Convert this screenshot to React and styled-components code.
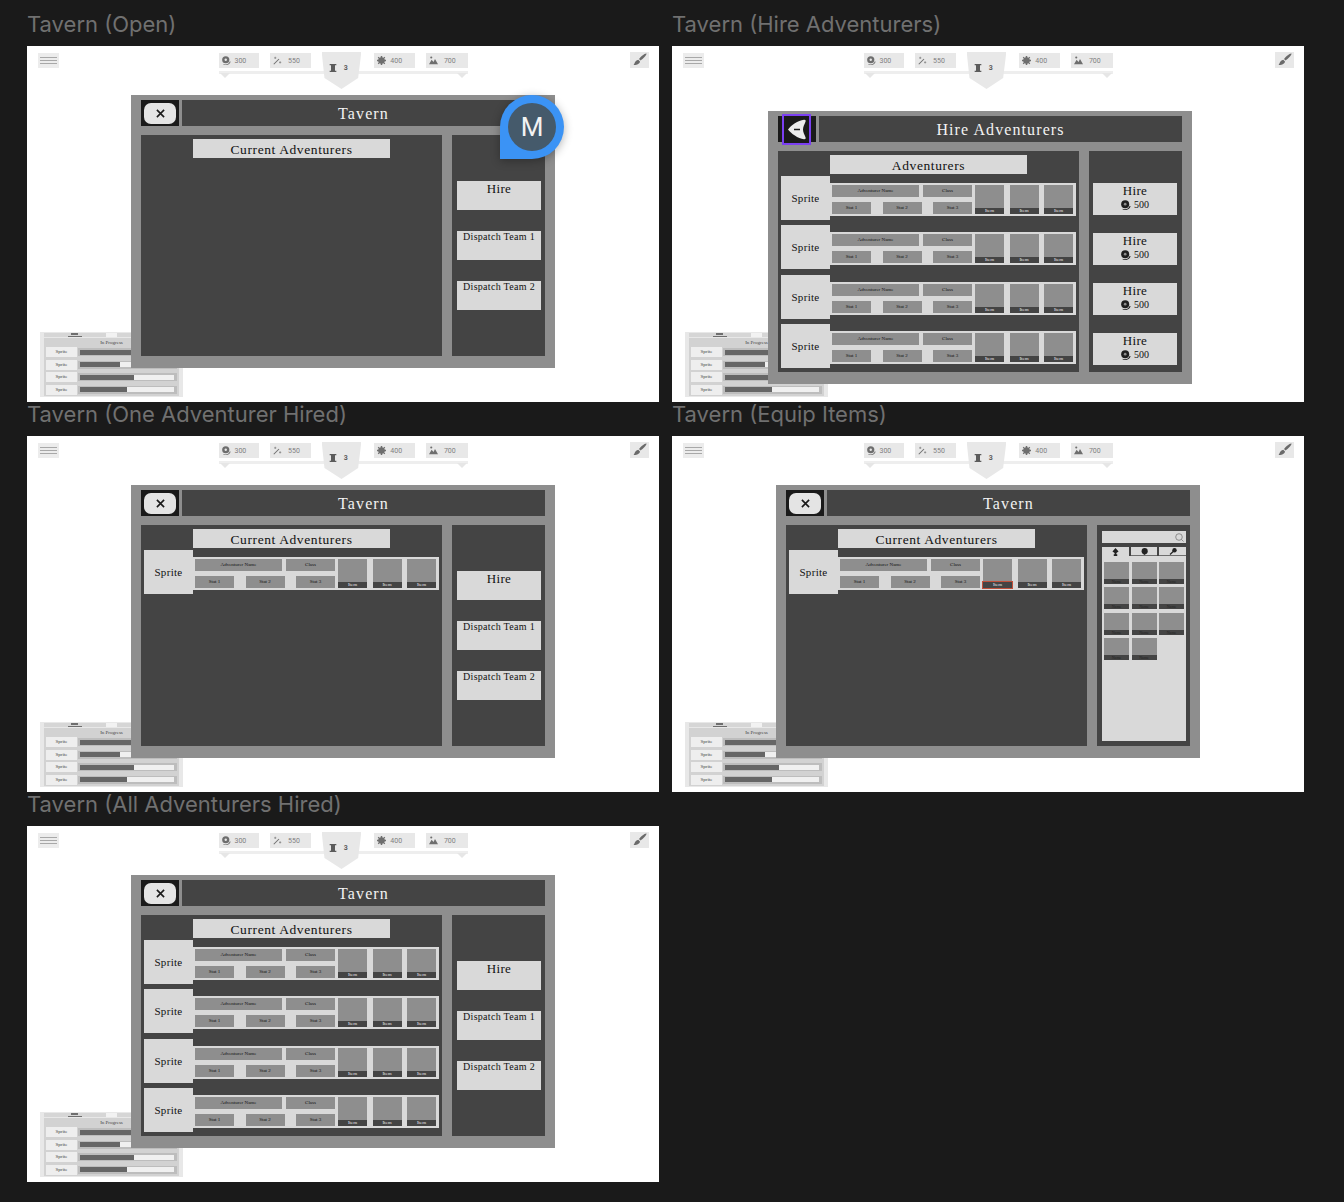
import styled, { createGlobalStyle } from "styled-components";

const GlobalStyle = createGlobalStyle`
  html, body {
    margin: 0;
    background: #1a1a1a;
  }
  * {
    box-sizing: border-box;
  }
`;

const SERIF = `"Liberation Serif", "DejaVu Serif", serif`;

const CoinsIcon = ({ size = 9, color = "#6e6e6e", hole = "#e6e6e6" }) => (
  <svg width={size} height={size} viewBox="0 0 12 12">
    <circle cx="5" cy="5" r="4.800" fill={color} />
    <circle cx="5" cy="5" r="1.600" fill={hole} />
    <path d="M2 10.500c3 1.500 7 .8 8.500-3.500l1 .6c-1 4-6 5.400-9.500 3.900z" fill={color} />
  </svg>
);

const WandIcon = () => (
  <svg width="9" height="9" viewBox="0 0 12 12" fill="none" stroke="#6e6e6e">
    <path d="M1 11 8 4" strokeWidth="1.400" />
    <path d="M3 1v3M1.500 2.500h3M9.500 7v3M8 8.500h3" strokeWidth=".8" />
  </svg>
);

const ScrollIcon = () => (
  <svg width="8" height="8" viewBox="0 0 12 12">
    <path d="M1 0h10v2H9v8h2v2H1v-2h2V2H1z" fill="#5c5c5c" />
  </svg>
);

const GearIcon = () => (
  <svg width="9" height="9" viewBox="0 0 12 12">
    <circle cx="6" cy="6" r="4.400" fill="#6e6e6e" />
    <path d="M5 0h2v12H5zM0 5h12v2H0zM2 1l9 9-1 1-9-9zM10 1l1 1-9 9-1-1z" fill="#6e6e6e" />
  </svg>
);

const MountainIcon = () => (
  <svg width="9" height="9" viewBox="0 0 12 12">
    <circle cx="3" cy="2" r="1.400" fill="#6e6e6e" />
    <path d="M0 11 3.500 5 6 8l2-4 4 7z" fill="#6e6e6e" />
  </svg>
);

const BrushIcon = () => (
  <svg width="14" height="14" viewBox="0 0 14 14">
    <path d="M13.500.5c.3 1.600-3.600 5.500-6 7L6 6c1.500-2.500 6-6 7.500-5.500z" fill="#6a6a6a" />
    <path d="M5.300 6.800 7 8.500c-.2 2.500-3.500 3.800-6.500 3.500 1.500-1 1-4.500 4.800-5.200z" fill="#6a6a6a" />
  </svg>
);

const CloseIcon = () => (
  <svg width="11" height="9" viewBox="0 0 12 10" fill="none" stroke="#1a1a1a" strokeWidth="1.800">
    <path d="M2 1l8 8M10 1 2 9" />
  </svg>
);

const BackIcon = () => (
  <svg width="20" height="21" viewBox="0 0 20 21">
    <path d="M1 10.500C4 6.500 11 1.500 17 .8c1.500-.2 2 .8 1.500 2-1 2.500-2.500 5-2.500 7.700s1.500 5.200 2.500 7.700c.5 1.200 0 2.200-1.500 2C11 19.500 4 14.500 1 10.500z" fill="#ececec" />
    <path d="M7 10.500h6" stroke="#1a1a1a" strokeWidth="1.500" />
  </svg>
);

const SearchIcon = () => (
  <svg width="9" height="9" viewBox="0 0 9 9" fill="none" stroke="#6e6e6e" strokeWidth=".7">
    <circle cx="4" cy="4" r="3.300" />
    <path d="M6.500 6.500 8.500 8.500" />
  </svg>
);

const SpadeIcon = () => (
  <svg width="7" height="8" viewBox="0 0 8 9">
    <path d="M4 0 7.500 4 5 5.500v1.500h1V9H2V7h1V5.500L.5 4z" fill="#222" />
  </svg>
);

const BlobIcon = () => (
  <svg width="7" height="7" viewBox="0 0 8 8">
    <circle cx="4.200" cy="3.600" r="3.500" fill="#222" />
    <path d="M2 6.500 4 8l2-1.500z" fill="#222" />
  </svg>
);

const KeyIcon = () => (
  <svg width="8" height="7" viewBox="0 0 8 7">
    <circle cx="5.500" cy="2.300" r="2.200" fill="#222" />
    <path d="M4.500 3.300 1 6.500" stroke="#222" strokeWidth="1.200" />
  </svg>
);

const HudBar = () => (
  <TopBar>
    <MenuButton>
      <MenuLine />
      <MenuLine />
      <MenuLine />
    </MenuButton>
    <HudGroup>
      <HudRail />
      <RailTipLeft />
      <RailTipRight />
      <HudPill $gap={4}>
        <CoinsIcon />
        <span>300</span>
      </HudPill>
      <HudPill $gap={6}>
        <WandIcon />
        <span>550</span>
      </HudPill>
      <Pennant>
        <ScrollIcon />
        <span>3</span>
      </Pennant>
      <HudPill $gap={4}>
        <GearIcon />
        <span>400</span>
      </HudPill>
      <HudPill $gap={6} $wide>
        <MountainIcon />
        <span>700</span>
      </HudPill>
    </HudGroup>
    <BrushButton>
      <BrushIcon />
    </BrushButton>
  </TopBar>
);

const PROGRESS = [57, 43, 57, 50];

const InProgress = () => (
  <ProgressCard>
    <ProgressTabs>
      <ProgressTab>
        <svg width="14" height="4" viewBox="0 0 14 4">
          <path d="M0 3h14v1H0zM3 0h7v2H3z" fill="#6e6e6e" />
        </svg>
      </ProgressTab>
      <ProgressTabGap />
      <ProgressTab />
    </ProgressTabs>
    <ProgressBody>
      <ProgressTitle>In Progress</ProgressTitle>
      {PROGRESS.map((value, i) => (
        <ProgressRow key={i}>
          <ProgressSprite>Sprite</ProgressSprite>
          <ProgressTrack>
            <ProgressInner>
              <ProgressFill style={{ width: `${value}%` }} />
            </ProgressInner>
          </ProgressTrack>
        </ProgressRow>
      ))}
    </ProgressBody>
  </ProgressCard>
);

const AdventurerRow = ({ marked }) => (
  <RowWrap>
    <Sprite>Sprite</Sprite>
    <RowBody>
      <RowInfo>
        <InfoLine>
          <NameTag>Adventurer Name</NameTag>
          <ClassTag>Class</ClassTag>
        </InfoLine>
        <InfoLine>
          <StatTag>Stat 1</StatTag>
          <StatTag>Stat 2</StatTag>
          <StatTag>Stat 3</StatTag>
        </InfoLine>
      </RowInfo>
      <ItemSlots>
        <ItemSlot>
          <ItemLabel $marked={marked}>Item</ItemLabel>
        </ItemSlot>
        <ItemSlot>
          <ItemLabel>Item</ItemLabel>
        </ItemSlot>
        <ItemSlot>
          <ItemLabel>Item</ItemLabel>
        </ItemSlot>
      </ItemSlots>
    </RowBody>
  </RowWrap>
);

const AdventurerPanel = ({ title, count, marked }) => (
  <MainPanel>
    <PanelTitle>{title}</PanelTitle>
    <RowList>
      {Array.from({ length: count }, (_, i) => (
        <AdventurerRow key={i} marked={marked} />
      ))}
    </RowList>
  </MainPanel>
);

const ActionPanel = () => (
  <SidePanel>
    <ActionList>
      <ActionButton $large>Hire</ActionButton>
      <ActionButton>Dispatch Team 1</ActionButton>
      <ActionButton>Dispatch Team 2</ActionButton>
    </ActionList>
  </SidePanel>
);

const HirePanel = () => (
  <SidePanel>
    <HireList>
      {[0, 1, 2, 3].map((i) => (
        <HireButton key={i}>
          <HireText>Hire</HireText>
          <HireCost>
            <CoinsIcon size={10} color="#1f1f1f" hole="#8e8e8e" />
            500
          </HireCost>
        </HireButton>
      ))}
    </HireList>
  </SidePanel>
);

const EquipPanel = () => (
  <SidePanel>
    <EquipInner>
      <SearchBox>
        <SearchIcon />
      </SearchBox>
      <EquipTabs>
        <EquipTab $active>
          <SpadeIcon />
        </EquipTab>
        <EquipTab>
          <BlobIcon />
        </EquipTab>
        <EquipTab>
          <KeyIcon />
        </EquipTab>
      </EquipTabs>
      <EquipBody>
        {Array.from({ length: 11 }, (_, i) => (
          <EquipItem key={i}>
            <EquipName>Name</EquipName>
          </EquipItem>
        ))}
      </EquipBody>
    </EquipInner>
  </SidePanel>
);

const Window = ({ left, top, title, back, children }) => (
  <ModalWindow $left={left} $top={top}>
    <ModalHeader>
      <CloseSlot>
        {back ? (
          <BackButton>
            <BackIcon />
          </BackButton>
        ) : (
          <CloseButton>
            <CloseIcon />
          </CloseButton>
        )}
      </CloseSlot>
      <TitleBar>{title}</TitleBar>
    </ModalHeader>
    <ModalBody>{children}</ModalBody>
  </ModalWindow>
);

const Artboard = ({ label, children }) => (
  <Cell>
    <BoardLabel>{label}</BoardLabel>
    <GameScreen>
      <HudBar />
      <InProgress />
      {children}
    </GameScreen>
  </Cell>
);

export default function App() {
  return (
    <Page>
      <GlobalStyle />
      <Artboard label="Tavern (Open)">
        <Window left={104} top={49} title="Tavern">
          <AdventurerPanel title="Current Adventurers" count={0} />
          <ActionPanel />
        </Window>
        <UserPin>
          <UserAvatar>M</UserAvatar>
        </UserPin>
      </Artboard>
      <Artboard label="Tavern (Hire Adventurers)">
        <Window left={96} top={65} title="Hire Adventurers" back>
          <AdventurerPanel title="Adventurers" count={4} />
          <HirePanel />
        </Window>
      </Artboard>
      <Artboard label="Tavern (One Adventurer Hired)">
        <Window left={104} top={49} title="Tavern">
          <AdventurerPanel title="Current Adventurers" count={1} />
          <ActionPanel />
        </Window>
      </Artboard>
      <Artboard label="Tavern (Equip Items)">
        <Window left={104} top={49} title="Tavern">
          <AdventurerPanel title="Current Adventurers" count={1} marked />
          <EquipPanel />
        </Window>
      </Artboard>
      <Artboard label="Tavern (All Adventurers Hired)">
        <Window left={104} top={49} title="Tavern">
          <AdventurerPanel title="Current Adventurers" count={4} />
          <ActionPanel />
        </Window>
      </Artboard>
    </Page>
  );
}

const Page = styled.div`
  width: 1344px;
  height: 1202px;
  background: #1a1a1a;
  padding: 12px 0 0 27px;
  display: grid;
  grid-template-columns: 632px 632px;
  grid-auto-rows: 390px;
  column-gap: 13px;
`;

const Cell = styled.div`
  display: flex;
  flex-direction: column;
`;

const BoardLabel = styled.div`
  height: 24px;
  margin-bottom: 10px;
  font-family: Inter, "Liberation Sans", sans-serif;
  font-size: 22px;
  line-height: 24px;
  color: #707070;
  white-space: nowrap;
`;

const GameScreen = styled.div`
  position: relative;
  width: 632px;
  height: 356px;
  background: #ffffff;
`;

const TopBar = styled.div`
  display: flex;
  justify-content: space-between;
  align-items: flex-start;
  padding: 6px 10px 0 11px;
`;

const MenuButton = styled.div`
  width: 21px;
  height: 15px;
  margin-top: 1px;
  background: #ececec;
  display: flex;
  flex-direction: column;
  justify-content: center;
  gap: 2px;
  padding: 0 2px;
`;

const MenuLine = styled.div`
  height: 1px;
  background: #a8a8a8;
`;

const HudGroup = styled.div`
  position: relative;
  display: flex;
  align-items: flex-start;
  gap: 11px;
  margin-left: -3px;
  width: 249px;
`;

const HudRail = styled.div`
  position: absolute;
  left: 0;
  right: 0;
  top: 19px;
  height: 3px;
  background: #eeeeee;
`;

const RailTipLeft = styled.div`
  position: absolute;
  left: 1px;
  top: 21px;
  border-left: 5px solid transparent;
  border-right: 5px solid transparent;
  border-top: 5px solid #e6e6e6;
`;

const RailTipRight = styled(RailTipLeft)`
  left: auto;
  right: 1px;
`;

const HudPill = styled.div`
  position: relative;
  width: ${(p) => (p.$wide ? "42px" : "41px")};
  height: 15px;
  margin-top: 1px;
  background: #e8e8e8;
  display: flex;
  align-items: center;
  gap: ${(p) => p.$gap}px;
  padding-left: 3px;
  font-family: Roboto, "Liberation Sans", sans-serif;
  font-size: 7px;
  color: #808080;
`;

const Pennant = styled.div`
  position: relative;
  width: 40px;
  height: 37px;
  margin-right: 2px;
  background: #e8e8e8;
  clip-path: polygon(0 0, 100% 0, 92% 70%, 50% 100%, 7% 70%);
  display: flex;
  align-items: flex-start;
  gap: 7px;
  padding: 12px 0 0 7px;
  font-family: Roboto, "Liberation Sans", sans-serif;
  font-size: 7px;
  font-weight: 700;
  color: #5c5c5c;
`;

const BrushButton = styled.div`
  width: 19px;
  height: 16px;
  background: #e8e8e8;
  display: flex;
  align-items: center;
  justify-content: center;
`;

const ProgressCard = styled.div`
  position: absolute;
  left: 13px;
  top: 286px;
  width: 143px;
  height: 65px;
  background: #e8e8e8;
  padding: 1px 4px 2px;
  display: flex;
  flex-direction: column;
  gap: 1px;
`;

const ProgressTabs = styled.div`
  display: flex;
  height: 7px;
`;

const ProgressTab = styled.div`
  flex: 1;
  background: #d6d6d6;
  display: flex;
  justify-content: center;
  align-items: center;
`;

const ProgressTabGap = styled.div`
  width: 11px;
  background: #f2f2f2;
`;

const ProgressBody = styled.div`
  flex: 1;
  background: #d2d2d2;
  padding: 1px 2px;
  display: flex;
  flex-direction: column;
  gap: 2.400px;
`;

const ProgressTitle = styled.div`
  height: 4px;
  margin-bottom: 2px;
  text-align: center;
  font-family: ${SERIF};
  font-size: 5px;
  line-height: 7px;
  color: #444;
`;

const ProgressRow = styled.div`
  display: flex;
  height: 10px;
  align-items: center;
`;

const ProgressSprite = styled.div`
  width: 31px;
  height: 10px;
  background: #eeeeee;
  text-align: center;
  font-family: ${SERIF};
  font-size: 5px;
  line-height: 10px;
  color: #444;
`;

const ProgressTrack = styled.div`
  flex: 1;
  height: 8px;
  margin-left: 1px;
  background: #bdbdbd;
  padding: 1.500px 3px 1.500px 2px;
`;

const ProgressInner = styled.div`
  height: 5px;
  background: #f0f0f0;
`;

const ProgressFill = styled.div`
  height: 100%;
  background: #666666;
`;

const ModalWindow = styled.div`
  position: absolute;
  left: ${(p) => p.$left}px;
  top: ${(p) => p.$top}px;
  width: 424px;
  height: 273px;
  background: #8e8e8e;
  padding: 5px 10px 12px;
  display: flex;
  flex-direction: column;
  gap: 9px;
`;

const ModalHeader = styled.div`
  display: flex;
  gap: 3px;
  height: 26px;
`;

const CloseSlot = styled.div`
  position: relative;
  width: 38px;
  background: #1a1a1a;
  display: flex;
  align-items: center;
  justify-content: center;
`;

const CloseButton = styled.div`
  width: 32px;
  height: 21px;
  background: #e4e4e4;
  border-radius: 7px;
  display: flex;
  align-items: center;
  justify-content: center;
`;

const BackButton = styled.div`
  position: absolute;
  left: 4px;
  top: -2px;
  width: 29px;
  height: 31px;
  background: #1a1a1a;
  border: 2px solid #7b3ff2;
  display: flex;
  align-items: center;
  justify-content: center;
`;

const TitleBar = styled.div`
  flex: 1;
  background: #444444;
  text-align: center;
  font-family: ${SERIF};
  font-size: 16px;
  letter-spacing: 1.100px;
  line-height: 28px;
  color: #f2f2f2;
`;

const ModalBody = styled.div`
  flex: 1;
  display: flex;
  gap: 10px;
  min-height: 0;
`;

const MainPanel = styled.div`
  width: 301px;
  background: #444444;
  padding: 4px 3px 0;
  display: flex;
  flex-direction: column;
  gap: 2px;
`;

const PanelTitle = styled.div`
  width: 197px;
  height: 19px;
  margin-left: 49px;
  background: #d9d9d9;
  text-align: center;
  font-family: ${SERIF};
  font-size: 13.500px;
  letter-spacing: 0.600px;
  line-height: 22px;
  color: #111111;
`;

const RowList = styled.div`
  display: flex;
  flex-direction: column;
  gap: 5.400px;
`;

const RowWrap = styled.div`
  display: flex;
  align-items: flex-start;
`;

const Sprite = styled.div`
  width: 49px;
  height: 44px;
  background: #d9d9d9;
  text-align: center;
  font-family: ${SERIF};
  font-size: 11px;
  letter-spacing: 0.300px;
  line-height: 44px;
  color: #111111;
`;

const RowBody = styled.div`
  width: 246px;
  height: 33px;
  margin-top: 7px;
  background: #d9d9d9;
  padding: 2px 3px 2px 2px;
  display: flex;
  gap: 3px;
`;

const RowInfo = styled.div`
  width: 140px;
  display: flex;
  flex-direction: column;
  justify-content: space-between;
`;

const InfoLine = styled.div`
  display: flex;
  justify-content: space-between;
  height: 12px;
`;

const TagBase = styled.div`
  height: 12px;
  background: #8e8e8e;
  text-align: center;
  font-family: ${SERIF};
  font-size: 5px;
  line-height: 12px;
  color: #111111;
`;

const NameTag = styled(TagBase)`
  width: 87px;
`;

const ClassTag = styled(TagBase)`
  width: 49px;
`;

const StatTag = styled(TagBase)`
  width: 39px;
`;

const ItemSlots = styled.div`
  display: flex;
  gap: 5.500px;
`;

const ItemSlot = styled.div`
  width: 29px;
  height: 29px;
  background: #8e8e8e;
  display: flex;
  align-items: flex-end;
`;

const ItemLabel = styled.div`
  width: 100%;
  height: 6px;
  background: #444444;
  outline: ${(p) => (p.$marked ? "1px solid #c0503a" : "none")};
  text-align: center;
  font-family: ${SERIF};
  font-size: 5px;
  line-height: 6px;
  color: #e8e8e8;
`;

const SidePanel = styled.div`
  width: 93px;
  background: #444444;
`;

const ActionList = styled.div`
  display: flex;
  flex-direction: column;
  gap: 21px;
  padding: 46px 4px 0 5px;
`;

const ActionButton = styled.div`
  height: 29px;
  background: #d9d9d9;
  text-align: center;
  font-family: ${SERIF};
  font-size: ${(p) => (p.$large ? "13px" : "10px")};
  letter-spacing: 0.300px;
  line-height: ${(p) => (p.$large ? "15px" : "11px")};
  white-space: nowrap;
  color: #111111;
`;

const HireList = styled.div`
  display: flex;
  flex-direction: column;
  gap: 18px;
  padding: 32px 5px 0 4px;
`;

const HireButton = styled.div`
  height: 32px;
  background: #d9d9d9;
  display: flex;
  flex-direction: column;
  align-items: center;
  font-family: ${SERIF};
  color: #111111;
`;

const HireText = styled.div`
  font-size: 13px;
  letter-spacing: 0.300px;
  line-height: 15px;
`;

const HireCost = styled.div`
  display: flex;
  align-items: center;
  gap: 3px;
  margin-top: 1px;
  font-size: 10px;
  line-height: 12px;
`;

const EquipInner = styled.div`
  height: 100%;
  padding: 6px 4px 5px 5px;
  display: flex;
  flex-direction: column;
`;

const SearchBox = styled.div`
  height: 12px;
  margin-bottom: 4px;
  background: #d9d9d9;
  display: flex;
  align-items: center;
  justify-content: flex-end;
  padding-right: 2px;
`;

const EquipTabs = styled.div`
  display: flex;
  gap: 2px;
  height: 9px;
`;

const EquipTab = styled.div`
  flex: 1;
  background: #d9d9d9;
  border-bottom: ${(p) => (p.$active ? "none" : "1px solid #6e6e6e")};
  display: flex;
  align-items: center;
  justify-content: center;
`;

const EquipBody = styled.div`
  flex: 1;
  background: #d9d9d9;
  padding: 6px 2px;
  display: grid;
  grid-template-columns: repeat(3, 25px);
  grid-auto-rows: 22px;
  column-gap: 2.500px;
  row-gap: 3.300px;
  align-content: start;
`;

const EquipItem = styled.div`
  background: #8e8e8e;
  display: flex;
  align-items: flex-end;
`;

const EquipName = styled.div`
  width: 100%;
  height: 5px;
  background: #444444;
  text-align: center;
  font-family: ${SERIF};
  font-size: 4px;
  line-height: 5px;
  color: #222;
`;

const UserPin = styled.div`
  position: absolute;
  left: 473px;
  top: 49px;
  width: 64px;
  height: 64px;
  background: #3b93f5;
  border-radius: 50% 50% 50% 0;
  box-shadow: 0 2px 10px rgba(0, 0, 0, 0.3);
  display: flex;
  align-items: center;
  justify-content: center;
`;

const UserAvatar = styled.div`
  width: 48px;
  height: 48px;
  border-radius: 50%;
  background: #455a6b;
  text-align: center;
  font-family: Roboto, "Liberation Sans", sans-serif;
  font-size: 26px;
  line-height: 48px;
  color: #f2f2f2;
`;
